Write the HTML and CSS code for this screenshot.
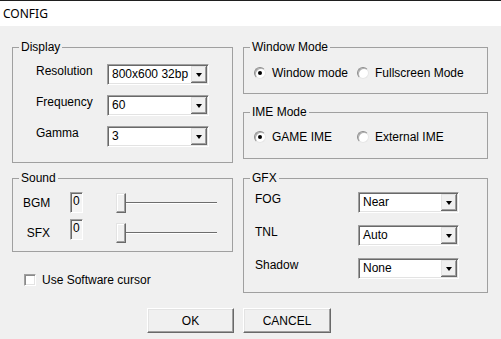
FILE: index.html
```html
<!DOCTYPE html>
<html lang="en">
<head>
    <meta charset="UTF-8">
    <meta name="viewport" content="width=device-width, initial-scale=1.0">
    <title>CONFIG</title>
    <link rel="stylesheet" href="styles.css">
</head>
<body>
    <div class="titlebar">CONFIG</div>

    <div class="dialog">
        <fieldset class="group">
            <legend>Display</legend>
            <div class="display-grid">
                <span class="label">Resolution</span>
                <div class="combo"><span class="value">800x600 32bp</span><span class="arrow"></span></div>
                <span class="label">Frequency</span>
                <div class="combo"><span class="value">60</span><span class="arrow"></span></div>
                <span class="label">Gamma</span>
                <div class="combo"><span class="value">3</span><span class="arrow"></span></div>
            </div>
        </fieldset>

        <div class="stack">
            <fieldset class="group">
                <legend>Window Mode</legend>
                <div class="radio-row window-row">
                    <label class="option"><span class="radio checked"></span>Window mode</label>
                    <label class="option"><span class="radio"></span>Fullscreen Mode</label>
                </div>
            </fieldset>
            <fieldset class="group ime">
                <legend>IME Mode</legend>
                <div class="radio-row ime-row">
                    <label class="option"><span class="radio checked"></span>GAME IME</label>
                    <label class="option"><span class="radio"></span>External IME</label>
                </div>
            </fieldset>
        </div>

        <div class="stack">
            <fieldset class="group">
                <legend>Sound</legend>
                <div class="sound">
                    <div class="sound-row">
                        <span class="sound-label">BGM</span>
                        <span class="edit">0</span>
                        <div class="slider"><span class="thumb"></span><span class="track"></span></div>
                    </div>
                    <div class="sound-row tall">
                        <span class="sound-label">SFX</span>
                        <span class="edit top">0</span>
                        <div class="slider"><span class="thumb"></span><span class="track"></span></div>
                    </div>
                </div>
            </fieldset>
            <label class="check-row"><span class="checkbox"></span>Use Software cursor</label>
        </div>

        <fieldset class="group">
            <legend>GFX</legend>
            <div class="gfx-grid">
                <span class="label">FOG</span>
                <div class="combo"><span class="value">Near</span><span class="arrow"></span></div>
                <span class="label">TNL</span>
                <div class="combo"><span class="value">Auto</span><span class="arrow"></span></div>
                <span class="label">Shadow</span>
                <div class="combo"><span class="value">None</span><span class="arrow"></span></div>
            </div>
        </fieldset>

        <button class="btn ok">OK</button>
        <button class="btn cancel">CANCEL</button>
    </div>
</body>
</html>
```

FILE: styles.css
```css
body {
    margin: 0;
    background-color: #f0f0f0;
    font-family: "Liberation Sans", Arial, sans-serif;
    font-size: 12px;
    color: #000;
    height: 339px;
    overflow: hidden;
}

.titlebar {
    height: 25px;
    border-top: 1px solid #1f1f1f;
    background: #fff;
    font-family: "Noto Sans", sans-serif;
    font-size: 12px;
    line-height: 25px;
    padding-left: 3px;
}

.dialog {
    display: grid;
    grid-template-columns: 221px 245px;
    column-gap: 10px;
    row-gap: 8px;
    align-items: start;
    padding: 14px 0 0 12px;
}

.group {
    margin: 0;
    padding: 0;
    min-width: 0;
    border: 1px solid #a0a0a0;
}

.group legend {
    margin-left: 6px;
    padding: 0 2px;
    line-height: 14px;
}

.ime {
    margin-top: 11px;
}

.label {
    line-height: 14px;
}

/* display + gfx forms */
.display-grid {
    display: grid;
    grid-template-columns: 71px 102px;
    grid-auto-rows: 21px;
    row-gap: 10px;
    padding: 10px 0 15px 23px;
}

.gfx-grid {
    display: grid;
    grid-template-columns: 103px 101px;
    grid-auto-rows: 21px;
    row-gap: 12px;
    padding: 7px 0 13px 11px;
}

.combo {
    display: flex;
    box-sizing: border-box;
    height: 21px;
    background: #fff;
    border: 1px solid;
    border-color: #a0a0a0 #fff #fff #a0a0a0;
    box-shadow: inset 1px 1px 0 #696969, inset -1px -1px 0 #e3e3e3;
    padding: 1px;
}

.value {
    flex: 1;
    overflow: hidden;
    white-space: nowrap;
    padding: 1px 0 0 3px;
    line-height: 14px;
}

.arrow {
    width: 16px;
    box-sizing: border-box;
    background: #f0f0f0;
    border-right: 1px solid #696969;
    border-bottom: 1px solid #696969;
    box-shadow: inset 1px 1px 0 #e3e3e3, inset -1px -1px 0 #a0a0a0;
    display: flex;
    align-items: center;
    justify-content: center;
}

.arrow::after {
    content: "";
    border-left: 3.5px solid transparent;
    border-right: 3.5px solid transparent;
    border-top: 4px solid #000;
    margin-top: 1px;
}

/* radio groups */
.radio-row {
    display: flex;
    align-items: center;
    height: 14px;
    padding-left: 10px;
}

.window-row {
    padding-top: 12px;
    padding-bottom: 13px;
}

.ime-row {
    padding-top: 11px;
    padding-bottom: 14px;
}

.option {
    display: flex;
    align-items: center;
    gap: 6px;
    line-height: 14px;
}

.option:first-child {
    width: 103px;
}

.radio {
    box-sizing: border-box;
    width: 12px;
    height: 12px;
    border-radius: 50%;
    background: #fff;
    border: 1px solid;
    border-color: #8c8c8c #e6e6e6 #e6e6e6 #8c8c8c;
    box-shadow: inset 1px 1px 0 #b0b0b0;
    display: flex;
    align-items: center;
    justify-content: center;
}

.radio.checked::after {
    content: "";
    width: 4px;
    height: 4px;
    border-radius: 50%;
    background: #000;
}

/* sound */
.sound {
    padding: 7px 0 4px 10px;
    display: flex;
    flex-direction: column;
    gap: 6px;
}

.sound-row {
    display: flex;
    align-items: center;
    height: 21px;
}

.sound-row.tall {
    height: 28px;
}

.sound-label {
    width: 27px;
    text-align: right;
    line-height: 14px;
}

.edit {
    box-sizing: border-box;
    width: 13px;
    height: 21px;
    margin-left: 20px;
    background: #f4f4f4;
    border: 1px solid;
    border-color: #a0a0a0 #fff #fff #a0a0a0;
    box-shadow: inset 1px 1px 0 #696969;
    padding: 1px 0 0 2px;
    line-height: 14px;
}

.edit.top {
    align-self: flex-start;
}

.slider {
    display: flex;
    align-items: center;
    width: 101px;
    margin-left: 33px;
}

.thumb {
    box-sizing: border-box;
    width: 10px;
    height: 20px;
    background: #f0f0f0;
    border: 1px solid;
    border-color: #e3e3e3 #696969 #696969 #e3e3e3;
    box-shadow: inset -1px -1px 0 #a0a0a0, inset 1px 1px 0 #fff;
}

.track {
    flex: 1;
    height: 1px;
    background: #6d6d6d;
    border-bottom: 1px solid #fff;
}

.check-row {
    display: flex;
    align-items: center;
    gap: 6px;
    margin: 21px 0 0 12px;
    line-height: 14px;
}

.checkbox {
    box-sizing: border-box;
    width: 12px;
    height: 12px;
    background: #fff;
    border: 1px solid;
    border-color: #a0a0a0 #fff #fff #a0a0a0;
    box-shadow: inset 1px 1px 0 #8a8a8a, inset -1px -1px 0 #e3e3e3;
}

/* buttons */
.btn {
    box-sizing: border-box;
    height: 25px;
    margin-top: 7px;
    font-family: "Liberation Sans", Arial, sans-serif;
    font-size: 12px;
    color: #000;
    background: #f0f0f0;
    border: 1px solid;
    border-color: #fff #696969 #696969 #fff;
    box-shadow: inset -1px -1px 0 #a0a0a0, inset 1px 1px 0 #e3e3e3;
    padding: 0;
}

.ok {
    width: 87px;
    justify-self: end;
    margin-right: -1px;
}

.cancel {
    width: 88px;
    justify-self: start;
}
```
